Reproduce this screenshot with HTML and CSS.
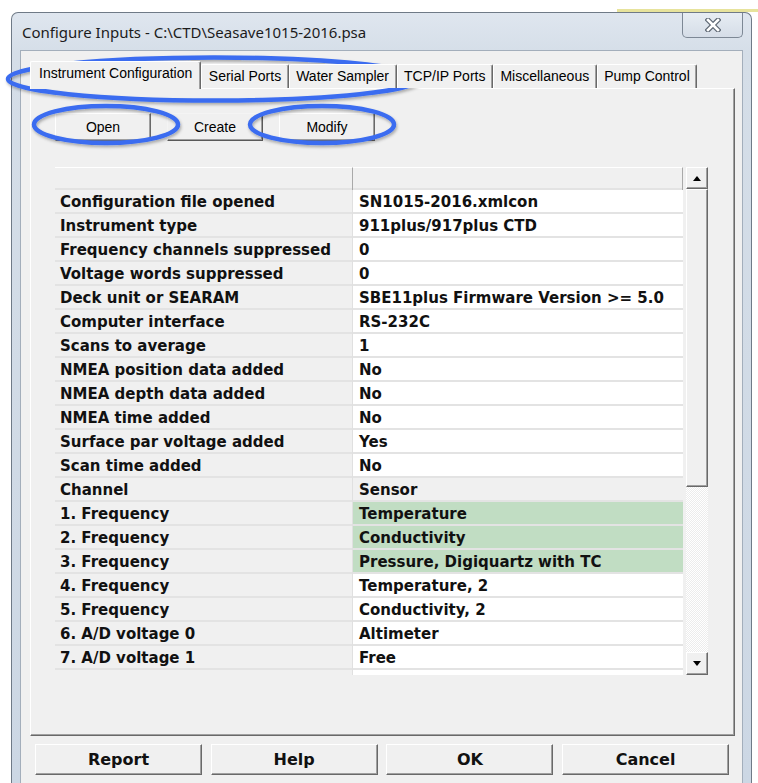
FILE: index.html
```html
<!DOCTYPE html>
<html lang="en">
<head>
<meta charset="utf-8">
<title>Configure Inputs</title>
<link rel="stylesheet" href="styles.css">
</head>
<body>
<div class="window">
  <div class="titlebar">
    <span class="title">Configure Inputs - C:\CTD\Seasave1015-2016.psa</span>
    <div class="close">
      <svg width="16" height="14" viewBox="0 0 16 14">
        <path d="M3 2 L13 12 M13 2 L3 12" stroke="#5d6773" stroke-width="5" stroke-linecap="square" fill="none"/>
        <path d="M3 2 L13 12 M13 2 L3 12" stroke="#ffffff" stroke-width="2.6" stroke-linecap="square" fill="none"/>
      </svg>
    </div>
  </div>
  <div class="client">
    <div class="tabs">
      <div class="tab active">Instrument Configuration</div>
      <div class="tab">Serial Ports</div>
      <div class="tab">Water Sampler</div>
      <div class="tab">TCP/IP Ports</div>
      <div class="tab">Miscellaneous</div>
      <div class="tab">Pump Control</div>
    </div>
    <div class="panel">
      <div class="toolbar">
        <button class="btn">Open</button>
        <button class="btn btn-default">Create</button>
        <button class="btn">Modify</button>
      </div>
      <div class="grid-area">
        <div class="grid">
          <div class="cell key head"></div><div class="cell val head"></div>
          <div class="cell key">Configuration file opened</div><div class="cell val">SN1015-2016.xmlcon</div>
          <div class="cell key">Instrument type</div><div class="cell val">911plus/917plus CTD</div>
          <div class="cell key">Frequency channels suppressed</div><div class="cell val">0</div>
          <div class="cell key">Voltage words suppressed</div><div class="cell val">0</div>
          <div class="cell key">Deck unit or SEARAM</div><div class="cell val">SBE11plus Firmware Version &gt;= 5.0</div>
          <div class="cell key">Computer interface</div><div class="cell val">RS-232C</div>
          <div class="cell key">Scans to average</div><div class="cell val">1</div>
          <div class="cell key">NMEA position data added</div><div class="cell val">No</div>
          <div class="cell key">NMEA depth data added</div><div class="cell val">No</div>
          <div class="cell key">NMEA time added</div><div class="cell val">No</div>
          <div class="cell key">Surface par voltage added</div><div class="cell val">Yes</div>
          <div class="cell key">Scan time added</div><div class="cell val">No</div>
          <div class="cell key">Channel</div><div class="cell val fixed">Sensor</div>
          <div class="cell key">1. Frequency</div><div class="cell val hl">Temperature</div>
          <div class="cell key">2. Frequency</div><div class="cell val hl">Conductivity</div>
          <div class="cell key">3. Frequency</div><div class="cell val hl">Pressure, Digiquartz with TC</div>
          <div class="cell key">4. Frequency</div><div class="cell val">Temperature, 2</div>
          <div class="cell key">5. Frequency</div><div class="cell val">Conductivity, 2</div>
          <div class="cell key">6. A/D voltage 0</div><div class="cell val">Altimeter</div>
          <div class="cell key">7. A/D voltage 1</div><div class="cell val">Free</div>
          <div class="cell key empty"></div><div class="cell val"></div>
        </div>
        <div class="scrollbar">
          <div class="sb-btn">
            <svg width="8" height="5" viewBox="0 0 8 5"><path d="M0 5 L4 0 L8 5 Z" fill="#000"/></svg>
          </div>
          <div class="thumb"></div>
          <div class="track"></div>
          <div class="sb-btn sb-down">
            <svg width="8" height="5" viewBox="0 0 8 5"><path d="M0 0 L8 0 L4 5 Z" fill="#000"/></svg>
          </div>
        </div>
      </div>
    </div>
    <div class="actions">
      <button class="big-btn">Report</button>
      <button class="big-btn">Help</button>
      <button class="big-btn">OK</button>
      <button class="big-btn">Cancel</button>
    </div>
  </div>
</div>
<svg class="marks" width="758" height="783" viewBox="0 0 758 783">
  <defs>
    <filter id="soft" x="-10%" y="-30%" width="120%" height="160%">
      <feDropShadow dx="1" dy="2" stdDeviation="1.4" flood-color="#000" flood-opacity="0.3"/>
    </filter>
  </defs>
  <g fill="none" stroke="#3a6cf0" stroke-width="4.5" filter="url(#soft)">
    <ellipse cx="214" cy="79" rx="206" ry="21.5"/>
    <ellipse cx="106" cy="124.5" rx="72" ry="18.5"/>
    <ellipse cx="322" cy="124.5" rx="72" ry="18.5"/>
  </g>
</svg>
</body>
</html>
```

FILE: styles.css
```css
* {
  box-sizing: border-box;
}

html,
body {
  margin: 0;
}

body {
  position: relative;
  width: 758px;
  height: 783px;
  overflow: hidden;
  background: linear-gradient(90deg, transparent 617px, #e7e39c 617px) 0 9px / 100% 3px no-repeat, #ffffff;
  font-family: "Liberation Sans", Arial, sans-serif;
  color: #000;
}

/* Window frame */
.window {
  margin: 12px 0 0 11px;
  width: 741px;
  height: 771px;
  border: 1px solid #6f7a87;
  border-bottom: 0;
  border-radius: 7px 7px 0 0;
  background: linear-gradient(#dfe6ef, #d5dee8 40px, #ccd7e4);
  padding: 0 8px;
  display: flex;
  flex-direction: column;
}

.titlebar {
  flex: none;
  height: 37px;
  display: flex;
  justify-content: space-between;
  align-items: flex-start;
}

.title {
  margin: 9px 0 0 2px;
  font-family: "Noto Sans", "Open Sans", sans-serif;
  font-size: 15px;
  line-height: 20px;
  color: #1c1c1c;
  white-space: nowrap;
}

.close {
  width: 61px;
  height: 25px;
  border: 1px solid #7d8895;
  border-top: 0;
  border-radius: 0 0 5px 5px;
  background: linear-gradient(#e7edf3, #d5dde7);
  display: flex;
  align-items: center;
  justify-content: center;
}

/* Client area */
.client {
  flex: 1;
  background: #f0f0f0;
  border: 1px solid #a3aebb;
  border-bottom: 0;
  padding: 10px 7px 0 9px;
}

.tabs {
  position: relative;
  z-index: 1;
  height: 27px;
  display: flex;
  align-items: flex-end;
}

.tab {
  height: 24px;
  padding: 0 6.5px;
  font-size: 14px;
  line-height: 23px;
  white-space: nowrap;
  background: #f0f0f0;
  border: 1px solid;
  border-color: #ffffff #696969 transparent #ffffff;
  border-bottom: 0;
  border-radius: 2px 2px 0 0;
  box-shadow: inset -1px 0 #a0a0a0;
}

.tab.active {
  height: 28px;
  margin-bottom: -1px;
  padding: 0 8px;
  line-height: 22px;
}

.panel {
  height: 648px;
  border: 1px solid;
  border-color: #ffffff #696969 #696969 #ffffff;
  box-shadow: inset -1px -1px #a0a0a0;
  padding: 24px 0 0 24px;
}

.toolbar {
  display: flex;
  gap: 16px;
}

.btn,
.big-btn,
.sb-btn,
.thumb {
  background: #f0f0f0;
  border: 1px solid;
  border-color: #ffffff #696969 #696969 #ffffff;
  box-shadow: inset -1px -1px #a0a0a0;
}

.btn {
  width: 96px;
  height: 28px;
  padding: 0;
  font-family: "Liberation Sans", Arial, sans-serif;
  font-size: 14px;
  color: #000;
}

.btn-default {
  border-color: #f4f4f4 #5a5a5a #5a5a5a #f4f4f4;
}

/* Property grid */
.grid-area {
  margin-top: 26px;
  display: flex;
  height: 508px;
}

.grid {
  width: 628px;
  height: 508px;
  overflow: hidden;
  display: grid;
  grid-template-columns: 298px 330px;
  grid-template-rows: 23px;
  grid-auto-rows: 24px;
  align-content: start;
}

.cell {
  font-family: "DejaVu Sans", sans-serif;
  font-weight: bold;
  font-size: 15px;
  line-height: 24px;
  color: #111;
  white-space: nowrap;
  overflow: hidden;
  box-shadow: inset 0 -2px #e3e3e3;
}

.key {
  background: #f0f0f0;
  padding-left: 5px;
  border-right: 1px solid #e0e0e0;
}

.val {
  background: #ffffff;
  padding-left: 6px;
}

.val.fixed {
  background: #f0f0f0;
}

.val.hl {
  background: #c1ddc3;
}

.head {
  background: #f0f0f0;
  border-top: 1px solid #ffffff;
  border-right: 1px solid #a9a9a9;
}

.key.empty {
  box-shadow: none;
}

/* Vertical scrollbar */
.scrollbar {
  width: 22px;
  margin-left: 3px;
  height: 508px;
  display: flex;
  flex-direction: column;
}

.sb-btn {
  height: 22px;
  display: flex;
  align-items: center;
  justify-content: center;
}

.sb-down {
  height: 23px;
}

.thumb {
  height: 298px;
}

.track {
  flex: 1;
  background: repeating-conic-gradient(#ffffff 0 25%, #ececec 0 50%) 0 0 / 2px 2px;
}

/* Dialog buttons */
.actions {
  margin-top: 8px;
  padding-left: 5px;
  display: grid;
  grid-template-columns: repeat(4, 167px);
  column-gap: 8.7px;
}

.big-btn {
  height: 31px;
  padding: 0;
  font-family: "DejaVu Sans", sans-serif;
  font-weight: bold;
  font-size: 16px;
  color: #111;
}

/* Annotation rings */
.marks {
  position: absolute;
  left: 0;
  top: 0;
  pointer-events: none;
}
```
